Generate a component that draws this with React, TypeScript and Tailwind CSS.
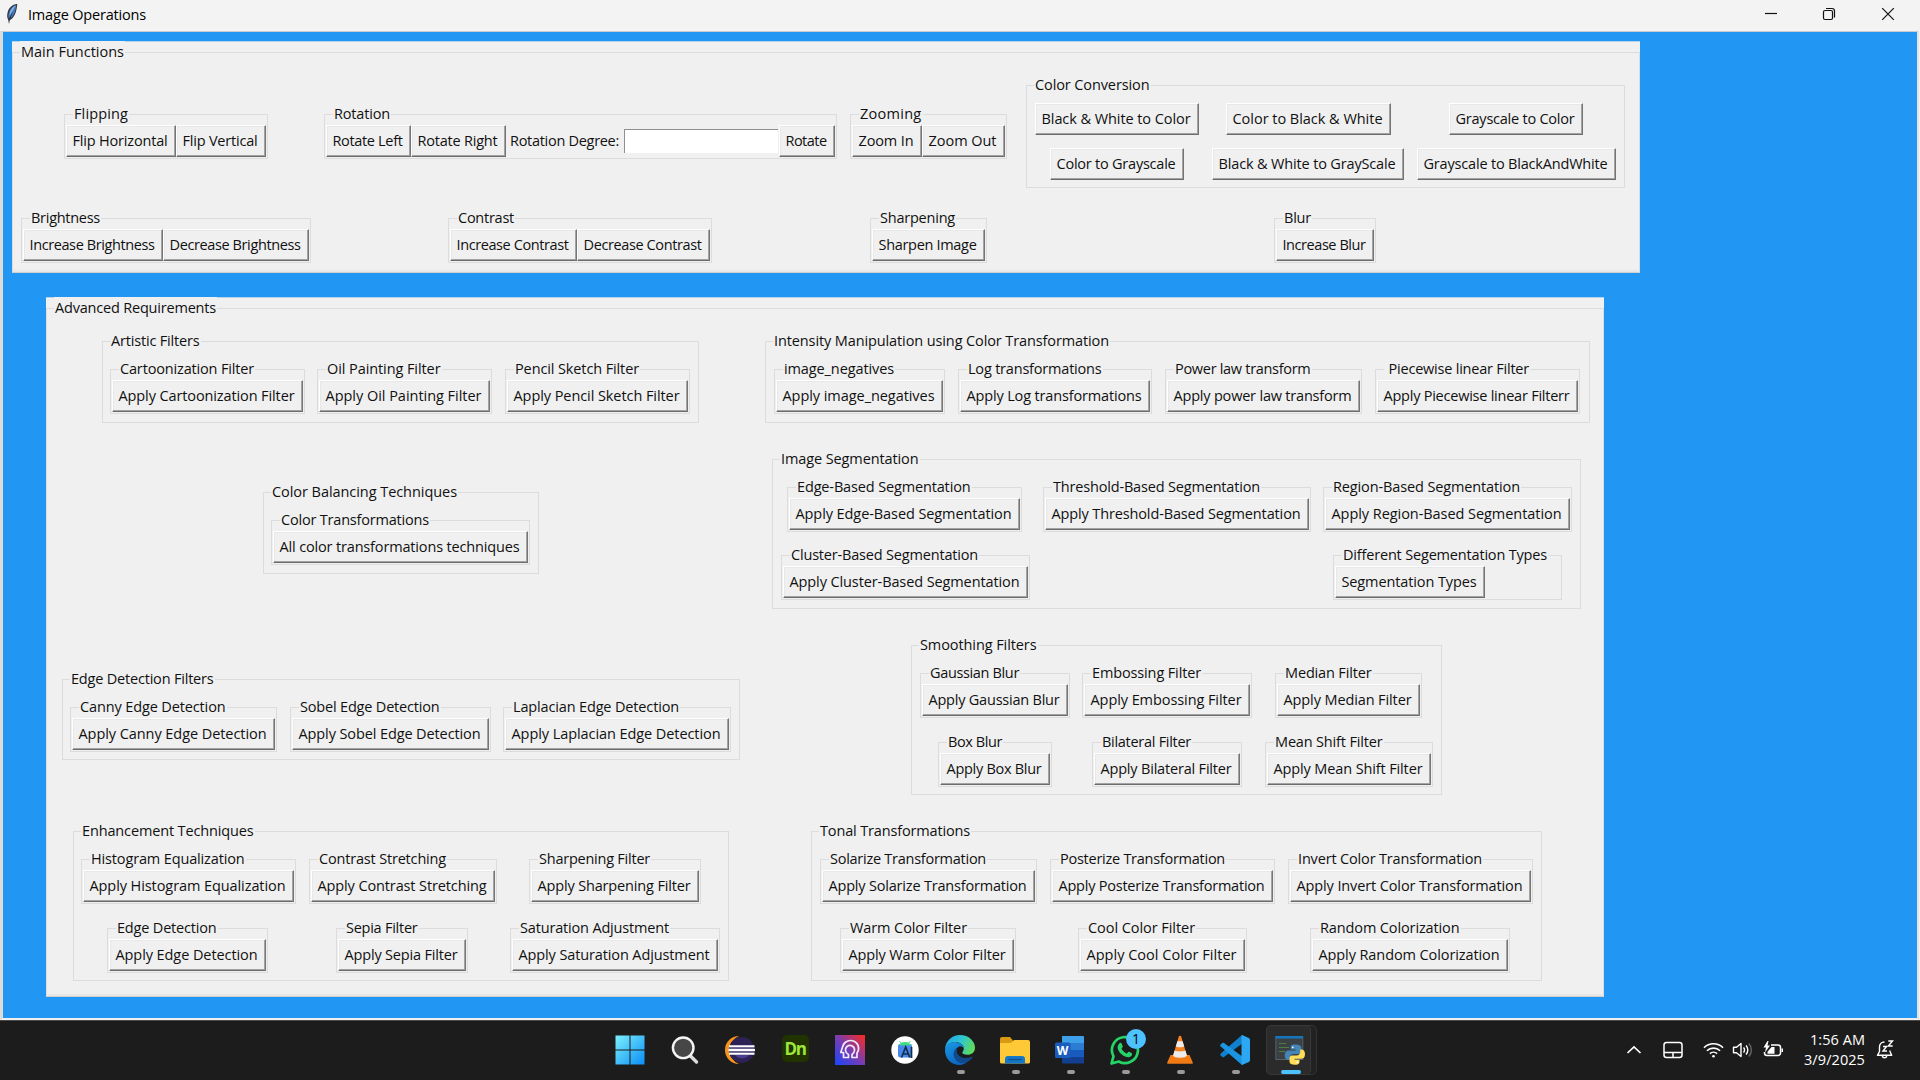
import React, { useLayoutEffect, useRef, useState } from "react";

/* Text tracked so that it fills an exact width; without `w` it fills its parent less the given inset. */
function Fit({ w, inset = 0, children }: { w?: number; inset?: number; children: string }) {
  const ref = useRef<HTMLSpanElement>(null);
  const [spacing, setSpacing] = useState(0);
  useLayoutEffect(() => {
    const el = ref.current;
    if (!el || !el.parentElement) return;
    el.style.letterSpacing = "0px";
    const natural = el.getBoundingClientRect().width;
    const target = w ?? el.parentElement.getBoundingClientRect().width - inset;
    const next = (target - natural) / children.length;
    el.style.letterSpacing = `${next}px`;
    setSpacing(next);
  }, [w, inset, children]);
  return (
    <span ref={ref} className="inline-block shrink-0 whitespace-pre" style={{ letterSpacing: spacing }}>
      {children}
    </span>
  );
}

function Btn({ children, className = "w-full" }: { children: string; className?: string }) {
  return (
    <button
      className={`flex h-[32px] shrink-0 items-center border border-t-white border-l-white border-r-[#757575] border-b-[#6b6b6b] bg-[#f0f0f0] pb-[1px] pl-[5.5px] text-left leading-[20px] shadow-[inset_-1px_-1px_0_#a3a3a3,inset_1px_1px_0_#e8e8e8] ${className}`}
    >
      <Fit inset={15}>{children}</Fit>
    </button>
  );
}

type FrameProps = {
  label: string;
  lw: number;
  className?: string;
  children?: React.ReactNode;
};

function Frame({ label, lw, className = "", children }: FrameProps) {
  return (
    <section className={`shrink-0 border border-[#dcdcdc] ${className}`}>
      <div className="-mt-[12px] ml-[7px] flex h-[22px] w-fit items-center bg-[#f0f0f0] px-[1px] pb-[1px] leading-[20px]">
        <Fit w={lw}>{label}</Fit>
      </div>
      {children}
    </section>
  );
}

function Leaf({ label, lw, className = "", button }: { label: string; lw: number; className?: string; button: string }) {
  return (
    <Frame label={label} lw={lw} className={`h-[45px] px-px ${className}`}>
      <Btn>{button}</Btn>
    </Frame>
  );
}

type LeafData = [label: string, lw: number, className: string, button: string];

function Row({ items, className }: { items: LeafData[]; className: string }) {
  return (
    <div className={`flex ${className}`}>
      {items.map(([label, lw, cls, button]) => (
        <Leaf key={button} label={label} lw={lw} className={cls} button={button} />
      ))}
    </div>
  );
}

const artistic: LeafData[] = [
  ["Cartoonization Filter", 134, "ml-[7px] w-[195px]", "Apply Cartoonization Filter"],
  ["Oil Painting Filter", 113.5, "ml-[12px] w-[175px]", "Apply Oil Painting Filter"],
  ["Pencil Sketch Filter", 124, "ml-[13px] w-[185px]", "Apply Pencil Sketch Filter"],
];
const balancing: LeafData[] = [["Color Transformations", 148, "ml-[7px] w-[259px]", "All color transformations techniques"]];
const edges: LeafData[] = [
  ["Canny Edge Detection", 145.5, "ml-[7px] w-[207px]", "Apply Canny Edge Detection"],
  ["Sobel Edge Detection", 139.5, "ml-[13px] w-[201px]", "Apply Sobel Edge Detection"],
  ["Laplacian Edge Detection", 166, "ml-[12px] w-[228px]", "Apply Laplacian Edge Detection"],
];
const enhance1: LeafData[] = [
  ["Histogram Equalization", 153.5, "ml-[7px] w-[215px]", "Apply Histogram Equalization"],
  ["Contrast Stretching", 127, "ml-[13px] w-[188px]", "Apply Contrast Stretching"],
  ["Sharpening Filter", 111, "ml-[32px] w-[172px]", "Apply Sharpening Filter"],
];
const enhance2: LeafData[] = [
  ["Edge Detection", 99.5, "ml-[33px] w-[161px]", "Apply Edge Detection"],
  ["Sepia Filter", 71.5, "ml-[68px] w-[132px]", "Apply Sepia Filter"],
  ["Saturation Adjustment", 149, "ml-[42px] w-[210px]", "Apply Saturation Adjustment"],
];
const intensity: LeafData[] = [
  ["image_negatives", 110, "ml-[8px] w-[171px]", "Apply image_negatives"],
  ["Log transformations", 133.5, "ml-[13px] w-[194px]", "Apply Log transformations"],
  ["Power law transform", 135.5, "ml-[13px] w-[197px]", "Apply power law transform"],
  [" Piecewise linear Filter", 144, "ml-[13px] w-[205px]", "Apply Piecewise linear Filterr"],
];
const segment: LeafData[] = [
  ["Edge-Based Segmentation", 173.5, "ml-[14px] w-[235px]", "Apply Edge-Based Segmentation"],
  ["Threshold-Based Segmentation", 207, "ml-[21px] w-[268px]", "Apply Threshold-Based Segmentation"],
  ["Region-Based Segmentation", 187, "ml-[12px] w-[249px]", "Apply Region-Based Segmentation"],
];
const smooth1: LeafData[] = [
  ["Gaussian Blur", 89, "ml-[8px] w-[150px]", "Apply Gaussian Blur"],
  ["Embossing Filter", 109, "ml-[12px] w-[170px]", "Apply Embossing Filter"],
  ["Median Filter", 86.5, "ml-[23px] w-[147px]", "Apply Median Filter"],
];
const smooth2: LeafData[] = [
  ["Box Blur", 54, "ml-[26px] w-[114px]", "Apply Box Blur"],
  ["Bilateral Filter", 89, "ml-[40px] w-[150px]", "Apply Bilateral Filter"],
  ["Mean Shift Filter", 107.5, "ml-[23px] w-[168px]", "Apply Mean Shift Filter"],
];
const tonal1: LeafData[] = [
  ["Solarize Transformation", 156, "ml-[8px] w-[217px]", "Apply Solarize Transformation"],
  ["Posterize Transformation", 165, "ml-[13px] w-[225px]", "Apply Posterize Transformation"],
  ["Invert Color Transformation", 184, "ml-[13px] w-[245px]", "Apply Invert Color Transformation"],
];
const tonal2: LeafData[] = [
  ["Warm Color Filter", 117, "ml-[28px] w-[176px]", "Apply Warm Color Filter"],
  ["Cool Color Filter", 107, "ml-[62px] w-[169px]", "Apply Cool Color Filter"],
  ["Random Colorization", 139.5, "ml-[63px] w-[200px]", "Apply Random Colorization"],
];

function MainFunctions() {
  return (
    <div className="ml-[9px] h-[232px] w-[1628px] border-t border-t-[#b5d5ef] bg-[#f0f0f0] pt-[10px]">
      <Frame label="Main Functions" lw={103} className="h-[221px] border-b-[#d0d0d0] shadow-[inset_0_-2px_0_#e8e8e8]">
        <div className="mt-[22px] flex h-[103px] items-center">
          <Frame label="Flipping" lw={54} className="ml-[51px] h-[45px] w-[204px] px-px">
            <div className="flex">
              <Btn className="w-[110px]">Flip Horizontal</Btn>
              <Btn className="w-[90px]">Flip Vertical</Btn>
            </div>
          </Frame>
          <Frame label="Rotation" lw={56} className="ml-[56px] h-[45px] w-[513px] px-px">
            <div className="flex items-center">
              <Btn className="w-[85px]">Rotate Left</Btn>
              <Btn className="w-[95px]">Rotate Right</Btn>
              <span className="ml-[4px] w-[114px] pb-[1px] leading-[20px]">
                <Fit w={109}>Rotation Degree:</Fit>
              </span>
              <input className="h-[24px] w-[154px] border-t border-l border-[#8f8f8f] bg-white outline-none" />
              <Btn className="ml-px w-[56px]">Rotate</Btn>
            </div>
          </Frame>
          <Frame label="Zooming" lw={61.5} className="ml-[13px] h-[45px] w-[157px] px-px">
            <div className="flex">
              <Btn className="w-[70px]">Zoom In</Btn>
              <Btn className="w-[83px]">Zoom Out</Btn>
            </div>
          </Frame>
          <Frame label="Color Conversion" lw={114.5} className="ml-[19px] h-[103px] w-[599px]">
            <div className="mt-[7px] flex">
              <Btn className="ml-[8px] w-[164px]">Black &amp; White to Color</Btn>
              <Btn className="ml-[27px] w-[165px]">Color to Black &amp; White</Btn>
              <Btn className="ml-[58px] w-[134px]">Grayscale to Color</Btn>
            </div>
            <div className="mt-[13px] flex">
              <Btn className="ml-[23px] w-[134px]">Color to Grayscale</Btn>
              <Btn className="ml-[28px] w-[192px]">Black &amp; White to GrayScale</Btn>
              <Btn className="ml-[13px] w-[199px]">Grayscale to BlackAndWhite</Btn>
            </div>
          </Frame>
        </div>
        <div className="mt-[30px] flex">
          <Frame label="Brightness" lw={69} className="ml-[8px] h-[45px] w-[290px] px-px">
            <div className="flex">
              <Btn className="w-[140px]">Increase Brightness</Btn>
              <Btn className="w-[146px]">Decrease Brightness</Btn>
            </div>
          </Frame>
          <Frame label="Contrast" lw={56} className="ml-[137px] h-[45px] w-[264px] px-px">
            <div className="flex">
              <Btn className="w-[127px]">Increase Contrast</Btn>
              <Btn className="w-[133px]">Decrease Contrast</Btn>
            </div>
          </Frame>
          <Leaf label="Sharpening" lw={75} className="ml-[158px] w-[117px]" button="Sharpen Image" />
          <Leaf label="Blur" lw={27} className="ml-[287px] w-[102px]" button="Increase Blur" />
        </div>
      </Frame>
    </div>
  );
}

function AdvancedRequirements() {
  return (
    <div className="mt-[24px] ml-[43px] h-[700px] w-[1558px] border-t border-t-[#b5d5ef] bg-[#f0f0f0] pt-[10px]">
      <Frame label="Advanced Requirements" lw={161} className="h-[689px] border-b-[#d0d0d0] shadow-[inset_0_-2px_0_#e8e8e8]">
        <div className="flex">
          <div className="w-[700px] pt-[22px]">
            <Frame label="Artistic Filters" lw={88.5} className="ml-[55px] h-[82px] w-[597px]">
              <Row items={artistic} className="mt-[17px]" />
            </Frame>
            <Frame label="Color Balancing Techniques" lw={185} className="mt-[69px] ml-[216px] h-[82px] w-[276px]">
              <Row items={balancing} className="mt-[17px]" />
            </Frame>
            <Frame label="Edge Detection Filters" lw={142.5} className="mt-[105px] ml-[15px] h-[81px] w-[678px]">
              <Row items={edges} className="mt-[17px]" />
            </Frame>
            <Frame label="Enhancement Techniques" lw={171.5} className="mt-[71px] ml-[26px] h-[150px] w-[656px]">
              <Row items={enhance1} className="mt-[17px]" />
              <Row items={enhance2} className="mt-[24px]" />
            </Frame>
          </div>
          <div className="pt-[22px]">
            <Frame label="Intensity Manipulation using Color Transformation" lw={335} className="ml-[18px] h-[82px] w-[825px]">
              <Row items={intensity} className="mt-[17px]" />
            </Frame>
            <Frame label="Image Segmentation" lw={137.5} className="mt-[36px] ml-[25px] h-[150px] w-[809px]">
              <Row items={segment} className="mt-[17px]" />
              <div className="mt-[23px] flex">
                <Leaf label="Cluster-Based Segmentation" lw={187} className="ml-[8px] w-[249px]" button="Apply Cluster-Based Segmentation" />
                <Frame label="Different Segementation Types" lw={204} className="ml-[303px] h-[45px] w-[229px] px-px">
                  <Btn className="w-[150px]">Segmentation Types</Btn>
                </Frame>
              </div>
            </Frame>
            <Frame label="Smoothing Filters" lw={116.5} className="mt-[36px] ml-[164px] h-[150px] w-[531px]">
              <Row items={smooth1} className="mt-[17px]" />
              <Row items={smooth2} className="mt-[24px]" />
            </Frame>
            <Frame label="Tonal Transformations" lw={150} className="mt-[36px] ml-[64px] h-[150px] w-[731px]">
              <Row items={tonal1} className="mt-[17px]" />
              <Row items={tonal2} className="mt-[24px]" />
            </Frame>
          </div>
        </div>
      </Frame>
    </div>
  );
}

function TitleBar() {
  return (
    <header className="flex h-[31px] shrink-0 items-center bg-[#f3f3f3] text-black">
      <svg className="mb-[3px] ml-[5px] h-[22px] w-[14px]" viewBox="0 0 14 22">
        <path d="M12.3 1C8 .8 3.800 4.500 2.600 9.500c-.7 3-.5 5.500.6 7.300l.8 4.200.9-3.900C8.800 15.500 11.500 9.500 12.300 1z" fill="#2b3038" />
        <path d="M11.300 2C8.400 2.500 5.300 5.200 4 9.300c-.8 2.500-.8 4.800-.1 6.500L8 8.500 5.600 15.500C8.500 13.500 10.800 8.300 11.300 2z" fill="#4479bd" />
        <path d="M10.800 2.600C8.500 3.500 6 6 4.900 9.500l-.4 3.300z" fill="#8fb4e0" />
      </svg>
      <div className="ml-[9px] pb-[2px] leading-[20px]">
        <Fit w={118}>Image Operations</Fit>
      </div>
      <div className="ml-auto flex items-center pr-[25px] pb-[3px]">
        <svg className="h-[14px] w-[14px]" viewBox="0 0 14 14">
          <path d="M1 6.500h12" stroke="#111" strokeWidth="1.200" />
        </svg>
        <svg className="ml-[44px] h-[14px] w-[14px]" viewBox="0 0 14 14" fill="none" stroke="#111" strokeWidth="1.200">
          <rect x="1.500" y="3.500" width="9" height="9" rx="1.500" />
          <path d="M4 1.500h6a2.500 2.500 0 0 1 2.500 2.500v6.500" />
        </svg>
        <svg className="ml-[45px] h-[14px] w-[14px]" viewBox="0 0 14 14" stroke="#111" strokeWidth="1.200">
          <path d="M1.200 1.200l11.600 11.600M12.800 1.200L1.200 12.800" />
        </svg>
      </div>
    </header>
  );
}

const icons: { name: string; running?: boolean; active?: boolean; art: React.ReactNode }[] = [
  {
    name: "Start",
    art: (
      <svg className="h-[30px] w-[30px]" viewBox="0 0 30 30">
        <defs>
          <linearGradient id="win" x1="0" y1="0" x2="1" y2="1">
            <stop offset="0" stopColor="#7df0fd" />
            <stop offset="1" stopColor="#0a8ef5" />
          </linearGradient>
        </defs>
        <path d="M.5.500h14v14H.5zM15.500.500h14v14h-14zM.5 15.500h14v14H.5zM15.500 15.500h14v14h-14z" fill="url(#win)" />
      </svg>
    ),
  },
  {
    name: "Search",
    art: (
      <svg className="h-[30px] w-[30px]" viewBox="0 0 30 30" fill="none">
        <path d="M19.500 20l7 7" stroke="#dcdcdc" strokeWidth="3.400" strokeLinecap="round" />
        <circle cx="13.200" cy="12.800" r="10.300" fill="#474747" stroke="#f5f5f5" strokeWidth="2.400" />
      </svg>
    ),
  },
  {
    name: "Eclipse",
    art: (
      <svg className="h-[30px] w-[30px]" viewBox="0 0 30 30">
        <path d="M14 1A14 14 0 0 0 14 29 17 17 0 0 1 4 15 17 17 0 0 1 14 1z" fill="#f7941e" />
        <circle cx="16.800" cy="15" r="12.900" fill="#2c2255" />
        <path d="M10 20h14a9 9 0 0 1-14 0z" fill="#4b3d8f" />
        <path d="M4 11.200h25.500M3.500 15h26.500M4 18.800h25.500" stroke="#fff" strokeWidth="2" />
        <path d="M4 13.100h25.500M4 16.900h25.500" stroke="#8f88b5" strokeWidth="1" />
      </svg>
    ),
  },
  {
    name: "Dimension",
    art: (
      <div className="mb-[3px] flex h-[27px] w-[27px] items-center justify-center rounded-[5px] bg-[#213300] font-['Open_Sans'] text-[17px] leading-none font-bold text-[#9fe83c]">
        <Fit w={21}>Dn</Fit>
      </div>
    ),
  },
  {
    name: "Mind",
    art: (
      <svg className="h-[30px] w-[30px]" viewBox="0 0 30 30" fill="none">
        <defs>
          <linearGradient id="mind" x1="0" y1="1" x2="1" y2="0">
            <stop offset="0" stopColor="#1746ff" />
            <stop offset=".5" stopColor="#7a3cb0" />
            <stop offset="1" stopColor="#ff2a1c" />
          </linearGradient>
        </defs>
        <path d="M0 0h30v30H0z" fill="url(#mind)" />
        <path d="M9 22.500h4.500v-3c-3.500-1.500-4-6-1.500-8 3.500-2.700 8 0 7.500 4-.2 1.800-1.200 3-2.500 4v3h5v-4.500c3-4 1.500-10-3-11.800-5-2-10.500.8-11.500 5.800L5.800 17.500h2.700v5z" stroke="#f5e9f7" strokeWidth="1.700" strokeLinejoin="round" />
      </svg>
    ),
  },
  {
    name: "Android Studio",
    art: (
      <svg className="h-[30px] w-[30px]" viewBox="0 0 30 30">
        <circle cx="15" cy="15" r="13.700" fill="#fff" />
        <rect x="8" y="9" width="14" height="13.500" rx="2" fill="#4a86f0" />
        <path d="M9 10.500a6.300 5 0 0 1 12 0z" fill="#3ddc84" />
        <path d="M9.500 6.200l1.800 2M20.500 6.200l-1.800 2" stroke="#3ddc84" strokeWidth="1" />
        <path d="M11.500 22.500l4.200-10.500 4 10.500M13 19h5.500M21.500 12v11" stroke="#103049" strokeWidth="1.700" fill="none" />
      </svg>
    ),
  },
  {
    name: "Edge",
    running: true,
    art: (
      <svg className="h-[30px] w-[30px]" viewBox="0 0 30 30">
        <defs>
          <linearGradient id="edgeTop" x1="0" y1=".3" x2="1" y2=".6">
            <stop offset="0" stopColor="#23a5e8" />
            <stop offset=".5" stopColor="#2fc6cf" />
            <stop offset="1" stopColor="#62dc55" />
          </linearGradient>
          <linearGradient id="edgeBody" x1="0" y1="0" x2=".6" y2="1">
            <stop offset="0" stopColor="#1a9be6" />
            <stop offset="1" stopColor="#0b63bd" />
          </linearGradient>
        </defs>
        <path d="M0 14C.6 6 7 0 15 0c9 0 15 6.500 15 12.500 0 5-3.500 7.300-7.500 7.300-3.500 0-5.500-1.300-5.300-2.300.2-.8 1.600-1.500 1.600-4C18.800 10 15 7 10.500 7 5 7 1.500 10 0 14z" fill="url(#edgeTop)" />
        <path d="M0 15C0 10 4.500 7 9.500 7c5 0 9.300 3 9.300 6.500-1-2-3-2.500-4.500-2-3 1-4.800 4.500-3.800 8.500 1.200 5 7 8 12.500 6C20.500 28.800 17.500 30 14.500 30 6 30 0 23.500 0 15z" fill="url(#edgeBody)" />
        <path d="M11 13.500C7 17 8 24 13.500 27c4.500 2.500 10 1 14-4.500.5-.7 0-1-.7-.7-6 2.700-13.500.7-14.800-4.300-.3-1.300-.3-2.800 0-4z" fill="#114a8c" />
      </svg>
    ),
  },
  {
    name: "File Explorer",
    running: true,
    art: (
      <svg className="h-[30px] w-[30px]" viewBox="0 0 30 30">
        <path d="M0 4a2 2 0 0 1 2-2h8l3 3.500V9H0z" fill="#d79a12" />
        <path d="M0 8h11l3-3h14a2 2 0 0 1 2 2v20a1.500 1.500 0 0 1-1.500 1.500h-27A1.500 1.500 0 0 1 0 27z" fill="#fdc937" />
        <path d="M5 28.500V24a3 3 0 0 1 3-3h14a3 3 0 0 1 3 3v4.500z" fill="#1478c8" />
        <path d="M9 24.500h12" stroke="#0c518e" strokeWidth="1.300" strokeLinecap="round" />
      </svg>
    ),
  },
  {
    name: "Word",
    running: true,
    art: (
      <div className="relative">
        <svg className="h-[30px] w-[30px]" viewBox="0 0 30 30">
          <path d="M7 1h21a1 1 0 0 1 1 1v6H7z" fill="#3ea0e8" />
          <path d="M7 8h22v7H7z" fill="#2b7cd3" />
          <path d="M7 15h22v7H7z" fill="#185abd" />
          <path d="M7 22h22v5.500a1 1 0 0 1-1 1H8a1 1 0 0 1-1-1z" fill="#123f8f" />
          <rect x="0" y="7.500" width="15.500" height="15.500" rx="1.500" fill="#1a5dbe" />
        </svg>
        <span className="absolute top-[9px] left-0 w-[15px] text-center font-['Open_Sans'] text-[12px] leading-[13px] font-bold text-white">W</span>
      </div>
    ),
  },
  {
    name: "WhatsApp",
    running: true,
    art: (
      <div className="relative">
        <svg className="h-[30px] w-[30px]" viewBox="0 0 30 30" fill="none">
          <path d="M1.500 28.500l2-7.200A13 13 0 1 1 8.700 26.500z" stroke="#25d366" strokeWidth="2.700" strokeLinejoin="round" />
          <path d="M9.500 8.300c.8-.8 1.700-.6 2.100.2l1.200 2.700c.2.600-1.200 1.900-1.200 2.500 1 2.100 2.900 3.800 5 4.700.7.100 1.700-1.900 2.400-1.600l2.700 1.300c.6.400.5 1.500 0 2.300-1 1.500-3.200 2.200-5 1.700-4.500-1.200-7.800-4.500-9-8.500-.5-2 .6-4.200 1.800-5.300z" fill="#25d366" />
        </svg>
        <span className="absolute -top-[6px] left-[16px] flex h-[20px] w-[20px] items-center justify-center rounded-full bg-[#4cc2ff] text-[14px] leading-none text-black">1</span>
      </div>
    ),
  },
  {
    name: "VLC",
    running: true,
    art: (
      <svg className="h-[30px] w-[30px]" viewBox="0 0 30 30">
        <path d="M5.500 20h19l3.300 7.500a1 1 0 0 1-1 1.300H3.200a1 1 0 0 1-1-1.300z" fill="#f07a14" />
        <path d="M13.800 1.500a1.300 1.300 0 0 1 2.400 0l6 20c-.8 2.800-13.600 2.800-14.400 0z" fill="#f58220" />
        <path d="M12.400 6.200h5.200l1.600 5.300c-1.500 1-6.900 1-8.400 0zM9.600 15.600c2.300 1.200 8.500 1.200 10.800 0l1.600 5.100c-1.600 2.600-12.400 2.600-14 0z" fill="#ececec" />
      </svg>
    ),
  },
  {
    name: "VS Code",
    running: true,
    art: (
      <svg className="h-[30px] w-[30px]" viewBox="0 0 30 30">
        <path d="M1 18.200L22 0l1 8L4 22c-.6.500-1.300.400-1.700 0L.6 20.500c-.7-.7-.5-1.500.4-2.300z" fill="#0f7fce" />
        <path d="M1 11.800L22 30l1-8L4 8c-.6-.5-1.300-.4-1.700 0L.6 9.500c-.7.700-.5 1.500.4 2.300z" fill="#1b94e2" />
        <path d="M22 0l6.800 3c.8.400 1.200 1 1.200 1.800v20.400c0 .8-.4 1.400-1.200 1.800L22 30c-.7-.6-.5-1.300-.5-2V2c0-.7-.2-1.400.5-2z" fill="#2ba7f3" />
      </svg>
    ),
  },
  {
    name: "Python",
    active: true,
    art: (
      <svg className="h-[30px] w-[30px]" viewBox="0 0 30 30">
        <rect x=".8" y="1.500" width="27" height="23" fill="#3b4045" stroke="#566069" />
        <path d="M.5 1h27.500v2.500H.5z" fill="#1576bd" />
        <path d="M4 8.500h7M4 12.500h10M4 16.500h6" stroke="#4b7f3c" strokeWidth="1.100" />
        <path d="M19.700 9.500c-4 0-4 1.500-4 3v2h5v1h-7c-2.500 0-4 1.700-4 4.700s1.300 4.800 3.500 4.800h1.800v-2.500c0-2 1.600-3.500 3.500-3.500h5c1.600 0 2.700-1.300 2.700-2.800v-3.700c0-2-2-3-6.500-3z" fill="#4584b6" />
        <path d="M20 29.800c4 0 4.500-1.500 4.500-3v-2h-5v-1h6.500c2.500 0 4-1.700 4-4.600s-1.300-4.700-3.500-4.700h-1.300V17c0 2-1.600 3.400-3.500 3.400h-4.500c-1.700 0-2.700 1.300-2.700 2.800v3.600c0 2 2 3 5.500 3z" fill="#ffde57" />
        <circle cx="17.800" cy="12.300" r=".9" fill="#fff" />
        <circle cx="22.300" cy="27.200" r=".9" fill="#fff" />
      </svg>
    ),
  },
];

function Taskbar() {
  return (
    <footer className="flex h-[60px] shrink-0 items-center border-t border-[#4a4a4a] bg-[#1c1c1c] pb-[2px] text-white">
      <div className="ml-[602px] flex h-full">
        {icons.map((icon) => (
          <div key={icon.name} className="relative flex h-full w-[55px] items-center justify-center pl-px">
            {icon.active && (
              <>
                <div className="absolute top-[4px] left-[13px] h-[50px] w-[42px] rounded-[5px] border border-[#333] bg-[#222]" />
                <div className="absolute top-[4px] left-[4px] h-[50px] w-[45px] rounded-[5px] border border-[#383838] bg-[#2b2b2b]" />
                <div className="absolute top-[49px] left-[19px] h-[4px] w-[20px] rounded-full bg-[#4cc2ff]" />
              </>
            )}
            <div className="relative">{icon.art}</div>
            {icon.running && <div className="absolute top-[49px] left-[25px] h-[4px] w-[8px] rounded-full bg-[#9a9a9a]" />}
          </div>
        ))}
      </div>
      <div className="ml-auto flex items-center">
        <svg className="h-[10px] w-[16px]" viewBox="0 0 16 10" fill="none" stroke="#fff" strokeWidth="1.700">
          <path d="M1.500 8L8 2l6.500 6" />
        </svg>
        <svg className="ml-[21px] h-[18px] w-[20px]" viewBox="0 0 20 18" fill="none" stroke="#fff" strokeWidth="1.500">
          <rect x="1" y="1.500" width="18" height="15" rx="2.500" />
          <path d="M1 11.500h18M10 11.500v5" />
        </svg>
        <svg className="ml-[20px] h-[18px] w-[21px]" viewBox="0 0 21 18" fill="none" stroke="#fff" strokeWidth="1.600">
          <path d="M1 6.700a13.500 13.500 0 0 1 19 0M3.900 9.800a9.400 9.400 0 0 1 13.200 0M6.900 12.700a5.200 5.200 0 0 1 7.200 0" />
          <circle cx="10.500" cy="15.200" r="1.300" fill="#fff" stroke="none" />
        </svg>
        <svg className="ml-[8px] h-[18px] w-[21px]" viewBox="0 0 21 18" fill="none" stroke="#fff" strokeWidth="1.400">
          <path d="M1.500 6.300h3L9 2.500v13l-4.500-3.800h-3z" strokeLinejoin="round" />
          <path d="M11.500 6.500a3.500 3.500 0 0 1 0 5M14 4.500a6.500 6.500 0 0 1 0 9" />
          <path d="M16.800 2.500a9.500 9.500 0 0 1 0 13" stroke="#666" />
        </svg>
        <svg className="ml-[10px] h-[18px] w-[21px]" viewBox="0 0 21 18" fill="none" stroke="#fff" strokeWidth="1.500">
          <path d="M8 4h7a2.500 2.500 0 0 1 2.500 2.500v5A2.500 2.500 0 0 1 15 14.500H4A2.500 2.500 0 0 1 1.500 12v-1" />
          <path d="M8.500 6h3v6.800H4.500v-2z" fill="#fff" stroke="none" />
          <path d="M18.500 7.500h1.500v3.500h-1.500z" fill="#fff" stroke="none" />
          <path d="M4.500 0L.5 6.500H3l-1 5 5-7H4.500L5.500 0z" fill="#fff" stroke="none" />
        </svg>
        <div className="ml-[20px] flex w-[61px] flex-col items-end leading-[20px]">
          <Fit w={55}>1:56 AM</Fit>
          <Fit w={61}>3/9/2025</Fit>
        </div>
        <svg className="mr-[26px] ml-[11px] h-[19px] w-[18px]" viewBox="0 0 18 19" fill="none" stroke="#fff" strokeWidth="1.400">
          <path d="M8.500 2C5.300 2 3.500 4.300 3.500 7v4.500L1.500 15.300h14.200L14 11.500v-1" strokeLinejoin="round" />
          <path d="M6.300 16a2.300 2.300 0 0 0 4.500 0" />
          <path d="M12.300 1h4.200l-4.200 5h4.400M7 6.500h3.600L7 11h4" />
        </svg>
      </div>
    </footer>
  );
}

export default function App() {
  return (
    <div className="flex h-[1080px] w-[1920px] flex-col overflow-hidden bg-[#f3f3f3] font-['Open_Sans','Noto_Sans',sans-serif] text-[14.5px] text-[#111]">
      <TitleBar />
      <main className="mr-[1px] flex h-[989px] shrink-0 flex-col border-t border-r-2 border-b-2 border-l-[3px] border-t-[#c9cdd2] border-r-[#e3e3e3] border-b-[#efefef] border-l-[#dcdcdc] bg-[#2196f3] pt-[9px]">
        <MainFunctions />
        <AdvancedRequirements />
      </main>
      <Taskbar />
    </div>
  );
}
